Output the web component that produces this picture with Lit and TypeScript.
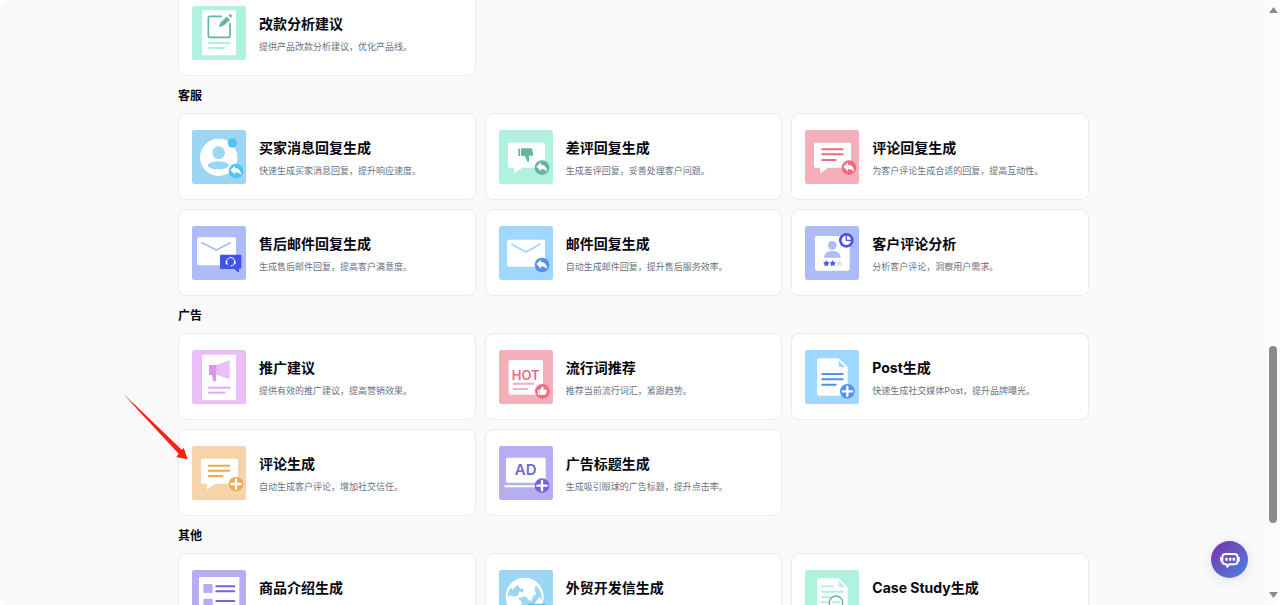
import { LitElement, html, svg, css, nothing } from "lit";
import { customElement, query } from "lit/decorators.js";

type Tool = { title: string; desc?: string; icon: string; marked?: boolean };
type Group = { name?: string; tools: Tool[] };

const GROUPS: Group[] = [
  { tools: [{ title: "改款分析建议", desc: "提供产品改款分析建议，优化产品线。", icon: "edit" }] },
  {
    name: "客服",
    tools: [
      { title: "买家消息回复生成", desc: "快速生成买家消息回复，提升响应速度。", icon: "buyer" },
      { title: "差评回复生成", desc: "生成差评回复，妥善处理客户问题。", icon: "bad" },
      { title: "评论回复生成", desc: "为客户评论生成合适的回复，提高互动性。", icon: "comment" },
      { title: "售后邮件回复生成", desc: "生成售后邮件回复，提高客户满意度。", icon: "aftersale" },
      { title: "邮件回复生成", desc: "自动生成邮件回复，提升售后服务效率。", icon: "mail" },
      { title: "客户评论分析", desc: "分析客户评论，洞察用户需求。", icon: "analysis" },
    ],
  },
  {
    name: "广告",
    tools: [
      { title: "推广建议", desc: "提供有效的推广建议，提高营销效果。", icon: "promo" },
      { title: "流行词推荐", desc: "推荐当前流行词汇，紧跟趋势。", icon: "hot" },
      { title: "Post生成", desc: "快速生成社交媒体Post，提升品牌曝光。", icon: "post" },
      { title: "评论生成", desc: "自动生成客户评论，增加社交信任。", icon: "review", marked: true },
      { title: "广告标题生成", desc: "生成吸引眼球的广告标题，提升点击率。", icon: "ad" },
    ],
  },
  {
    name: "其他",
    tools: [
      { title: "商品介绍生成", icon: "product" },
      { title: "外贸开发信生成", icon: "globe" },
      { title: "Case Study生成", icon: "study" },
    ],
  },
];

const tile = (c: string) => svg`<rect width="162" height="162" rx="7" fill=${c} />`;
const line = (x1: number, x2: number, y: number, c: string, w = 6) =>
  svg`<path d="M${x1} ${y}H${x2}" stroke=${c} stroke-width=${w} stroke-linecap="round" />`;
const reply = (x: number, y: number, c: string) => svg`<g transform="translate(${x} ${y})">
  <circle r="22" fill=${c} />
  <path d="M-17 -3L-3 -16V-9C9 -9 15 0 15 13C10 6 5 4 -3 4V11Z" fill="#fff" /></g>`;
const plus = (x: number, y: number, c: string) => svg`<g transform="translate(${x} ${y})">
  <circle r="22" fill=${c} />
  <path d="M-14 0H14M0 -14V14" stroke="#fff" stroke-width="7" stroke-linecap="round" /></g>`;
const bubble = svg`<path fill="#fff" d="M31 38H134Q138 38 138 42V109Q138 113 134 113H70L48 129Q45 131 45 127V113H31Q27 113 27 109V42Q27 38 31 38Z" />`;
const page = (fold: string) => svg`<path fill="#fff" d="M43 25H101L128 52V130Q128 137 121 137H43Q36 137 36 130V32Q36 25 43 25Z" />
  <path d="M101 32V48Q101 52 105 52H121Z" fill=${fold} />`;
const star = (x: number, c: string) => svg`<path transform="translate(${x} 112)" fill=${c}
  stroke=${c} stroke-width="2" stroke-linejoin="round"
  d="M0 -8L2.5 -2.8L8 -2.2L4 1.8L5 7.4L0 4.6L-5 7.4L-4 1.8L-8 -2.2L-2.5 -2.8Z" />`;

const ICONS: Record<string, unknown> = {
  edit: svg`${tile("#b0f2df")}<rect x="30" y="13" width="102" height="135" rx="2" fill="#fff" />
    <path d="M88 31H54Q49 31 49 36V89Q49 94 54 94H109Q114 94 114 89V52" fill="none" stroke="#62b5a0" stroke-width="5" stroke-linecap="round" />
    <path d="M82 62L86 50L104 33L113 42L95 58Z" fill="#62b5a0" stroke="#62b5a0" stroke-width="2" stroke-linejoin="round" />
    <path d="M111 28L115 25L119 29L116 34Z" fill="#62b5a0" stroke="#62b5a0" stroke-width="3" stroke-linejoin="round" />
    ${line(50, 113, 111, "#b0f2df")}${line(50, 97, 126, "#b0f2df")}`,
  buyer: svg`${tile("#9bd6f3")}<circle cx="80" cy="82" r="56" fill="#fff" />
    <circle cx="80" cy="68" r="19" fill="#9bd6f3" /><ellipse cx="79" cy="106" rx="32" ry="12" fill="#9bd6f3" />
    <circle cx="121" cy="39" r="14" fill="#4fc3f7" />${reply(132, 123, "#4fc3f7")}`,
  bad: svg`${tile("#b0f2df")}${bubble}
    <path fill="#62b5a0" d="M58 56H63V78H58ZM66 55H98Q102 62 103 77H90V92Q90 97 85 95Q83 84 76 78L66 77Z" />
    ${reply(129, 113, "#62b5a0")}`,
  comment: svg`${tile("#f4afba")}${bubble}${line(52, 113, 58, "#ef6b82")}${line(52, 113, 73, "#ef6b82")}${line(52, 92, 90, "#ef6b82")}
    ${reply(132, 113, "#ef6b82")}`,
  aftersale: svg`${tile("#adbcf8")}<rect x="15" y="34" width="117" height="84" rx="6" fill="#fff" />
    <path d="M30 50L73 72L115 50" fill="none" stroke="#adbcf8" stroke-width="5" stroke-linecap="round" />
    <path d="M87 86H145Q148 86 148 89V125Q148 128 145 128H141V140L126 129H87Q84 129 84 126V89Q84 86 87 86Z" fill="#4253ea" />
    <path d="M106 115Q101 104 108 98Q116 91 124 97Q131 104 126 115Q123 120 117 120" fill="none" stroke="#fff" stroke-width="3" stroke-linecap="round" />
    <path d="M103 106V113M129 106V113" stroke="#fff" stroke-width="4" stroke-linecap="round" />`,
  mail: svg`${tile("#a0d7ff")}<rect x="24" y="41" width="114" height="81" rx="6" fill="#fff" />
    <path d="M38 55L81 78L123 55" fill="none" stroke="#a0d7ff" stroke-width="5" stroke-linecap="round" />
    ${reply(129, 117, "#5591ec")}`,
  analysis: svg`${tile("#adbcf8")}<rect x="30" y="30" width="104" height="104" rx="6" fill="#fff" />
    <circle cx="82" cy="58" r="13" fill="#adbcf8" /><path d="M57 95Q58 75 82 75Q106 75 107 95Z" fill="#adbcf8" />
    ${star(64, "#4353e8")}${star(83, "#4353e8")}${star(103, "#dcdde4")}
    <circle cx="124" cy="43" r="22" fill="#4353e8" />
    <circle cx="124" cy="43" r="14" fill="#fff" />
    <path d="M124 29V43H138" fill="none" stroke="#4353e8" stroke-width="4" />`,
  promo: svg`${tile("#e9bef9")}<rect x="30" y="14" width="102" height="137" rx="2" fill="#fff" />
    <path d="M74 44L113 31V88L74 74Z" fill="#e9bef9" />
    <path d="M51 45H74V75H72L73 93H63L60 75H51Z" fill="#d999ea" />
    ${line(50, 113, 113, "#e3a9f5")}${line(50, 97, 128, "#e3a9f5")}`,
  hot: svg`${tile("#f4afba")}<rect x="29" y="30" width="103" height="104" rx="6" fill="#fff" />
    <text x="80" y="90" text-anchor="middle" font-size="39" font-weight="600" fill="#ef6b82">HOT</text>
    ${line(44, 103, 101, "#f4afba")}${line(44, 84, 117, "#f4afba")}
    <circle cx="130" cy="124" r="22" fill="#ef6b82" />
    <path d="M117 121H121V134H117ZM123 121L129 111Q133 109 133 113L132 119H142Q144 127 139 134H123Z" fill="#fff" stroke="#fff" stroke-width="1" />`,
  post: svg`${tile("#a0d7ff")}${page("#a0d7ff")}
    ${line(52, 113, 72, "#5591ec")}${line(52, 113, 88, "#5591ec")}${line(52, 92, 104, "#5591ec")}
    ${plus(127, 124, "#5591ec")}`,
  review: svg`${tile("#f6d3a9")}${bubble}${line(50, 112, 59, "#f2a850")}${line(50, 112, 74, "#f2a850")}${line(50, 91, 90, "#f2a850")}
    ${plus(132, 114, "#f2a850")}`,
  ad: svg`${tile("#b6aef2")}<rect x="21" y="35" width="119" height="75" rx="5" fill="#fff" />
    <text x="80" y="88" text-anchor="middle" font-size="45" font-weight="600" fill="#7464dc">AD</text>
    ${line(19, 112, 121, "#fff", 6)}${plus(129, 119, "#7464dc")}`,
  product: svg`${tile("#b6aef2")}<rect x="21" y="21" width="121" height="120" rx="2" fill="#fff" />
    ${[42, 86].map(
      (y) => svg`<rect x="34" y=${y} width="28" height="27" rx="4" fill="#b6aef2" />
      ${line(73, 127, y + 7, "#7464dc")}${line(73, y > 50 ? 108 : 127, y + 22, "#7464dc")}`,
    )}`,
  globe: svg`${tile("#9bd6f3")}<circle cx="77" cy="80" r="57" fill="#fff" />
    <path fill="#9bd6f3" d="M25 80Q27 62 36 52L40 60L48 50L58 46L62 54L73 58L72 68L62 64L58 74L46 80L34 76Z" />
    <path fill="#9bd6f3" d="M56 82L64 84L76 78L84 84L90 92H98L104 76L112 72L106 58L110 46Q122 56 128 72L129 88L120 82L112 94L104 104H88L80 114L66 110L68 96Z" />
    <rect x="87" y="101" width="55" height="38" rx="3" fill="#4fc3f7" />
    <path d="M93 107L114 118L136 107" fill="none" stroke="#9be0fb" stroke-width="3" />`,
  study: svg`${tile("#b0f2df")}${page("#b0f2df")}
    ${line(50, 83, 49, "#b0f2df")}${line(50, 113, 65, "#b0f2df")}${line(50, 76, 81, "#b0f2df")}${line(50, 70, 97, "#b0f2df")}
    <circle cx="93" cy="98" r="20" fill="#fff" stroke="#62b5a0" stroke-width="4" />${line(82, 104, 97, "#b0f2df")}
    <path d="M107 112L120 125" stroke="#62b5a0" stroke-width="5" stroke-linecap="round" />`,
};

@customElement("tool-card")
class ToolCard extends LitElement {
  static properties = { tool: { attribute: false } };
  declare tool: Tool;

  static styles = css`
    :host {
      display: block;
    }
    .card {
      position: relative;
      display: flex;
      align-items: center;
      gap: 13px;
      padding: 16px 13px 15px;
      border: 1px solid #e9ebf5;
      border-radius: 8px;
      background: #fff;
      color: #05070f;
      text-decoration: none;
    }
    .icon {
      flex: none;
      width: 54px;
      height: 54px;
    }
    .text {
      min-width: 0;
    }
    .title {
      margin: 0 0 5px;
      font-size: 14px;
      line-height: 22px;
      font-weight: 700;
    }
    .desc {
      margin: 0;
      min-height: 14px;
      font-size: 9px;
      line-height: 14px;
      color: #6b7280;
    }
    .pointer {
      position: absolute;
      left: -55px;
      top: -36px;
      width: 65px;
      height: 66px;
      pointer-events: none;
    }
  `;

  render() {
    const t = this.tool;
    return html`<a class="card" href="#">
      <svg class="icon" viewBox="0 0 162 162" aria-hidden="true">${ICONS[t.icon]}</svg>
      <div class="text">
        <h3 class="title">${t.title}</h3>
        <p class="desc">${t.desc ?? nothing}</p>
      </div>
      ${t.marked
        ? html`<svg class="pointer" viewBox="0 0 195 198" aria-hidden="true">
            <defs>
              <linearGradient id="fade" x1="0" y1="0" x2="1" y2="1">
                <stop offset="0" stop-color="#ff2010" stop-opacity=".4" />
                <stop offset=".15" stop-color="#ff2010" />
              </linearGradient>
            </defs>
            <path fill="url(#fade)" d="M3 4L2 5L164 179L157 189L191 196L179 161L174 168Z" />
          </svg>`
        : nothing}
    </a>`;
  }
}

@customElement("app-root")
class AppRoot extends LitElement {
  @query(".scroller") scroller!: HTMLElement;

  static styles = css`
    :host {
      display: block;
      font-family: Inter, "Noto Sans CJK SC", sans-serif;
      color: #05070f;
    }
    .frame {
      position: relative;
      display: flex;
      height: 100vh;
      overflow: hidden;
      border-radius: 8px;
      background: #fafafa;
    }
    .scroller {
      flex: 1;
      min-width: 0;
      overflow: hidden;
    }
    .content {
      width: 100%;
      max-width: 911px;
      margin: 0 auto;
    }
    .heading {
      margin: 0;
      padding: 11px 0 8px;
      font-size: 12px;
      line-height: 18px;
      font-weight: 700;
    }
    .grid {
      display: grid;
      grid-template-columns: repeat(3, 1fr);
      gap: 9px;
    }
    .rail {
      flex: none;
      width: 13px;
      box-sizing: border-box;
      padding: 7px 2px;
      display: flex;
      flex-direction: column;
      background: #fcfcfc;
    }
    .tip {
      width: 9px;
      height: 6px;
    }
    .track {
      flex: 1;
      display: flex;
      flex-direction: column;
    }
    .before {
      flex: 333;
    }
    .thumb {
      flex: 177;
      width: 8px;
      border-radius: 4px;
      background: #8b8b8b;
    }
    .after {
      flex: 69;
    }
    .chat {
      position: absolute;
      right: 32px;
      bottom: 27px;
      width: 37px;
      height: 37px;
      padding: 0;
      border: 0;
      border-radius: 50%;
      display: grid;
      place-items: center;
      background: linear-gradient(135deg, #7e2ea8, #4b86e6);
      box-shadow: 0 2px 12px rgba(80, 90, 180, 0.16);
    }
    .chat-icon {
      width: 20px;
      height: 18px;
    }
  `;

  async firstUpdated() {
    const cards = Array.from(this.renderRoot.querySelectorAll("tool-card")) as ToolCard[];
    await Promise.all(cards.map((c) => c.updateComplete));
    this.scroller.scrollTop = 11;
  }

  render() {
    return html`<div class="frame">
      <main class="scroller">
        <div class="content">
          ${GROUPS.map(
            (g) => html`<section>
              ${g.name ? html`<h2 class="heading">${g.name}</h2>` : nothing}
              <div class="grid">${g.tools.map((t) => html`<tool-card .tool=${t}></tool-card>`)}</div>
            </section>`,
          )}
        </div>
      </main>
      <div class="rail" aria-hidden="true">
        <svg class="tip" viewBox="0 0 9 6"><path d="M4.5 0L9 6H0Z" fill="#8b8b8b" /></svg>
        <div class="track">
          <div class="before"></div>
          <div class="thumb"></div>
          <div class="after"></div>
        </div>
        <svg class="tip" viewBox="0 0 9 6"><path d="M0 0H9L4.5 6Z" fill="#8b8b8b" /></svg>
      </div>
      <button class="chat" aria-label="聊天">
        <svg class="chat-icon" viewBox="0 0 60 54" aria-hidden="true">
          <path
            d="M18 9H42Q53 9 53 19V30Q53 40 42 40H28L22 47L19 40H18Q7 40 7 30V19Q7 9 18 9Z"
            fill="none" stroke="#fff" stroke-width="6" stroke-linejoin="round" />
          <path d="M3 20V30M57 20V30" stroke="#fff" stroke-width="5" stroke-linecap="round" />
          <g fill="#fff">
            <rect x="16" y="20" width="7" height="9" rx="2" />
            <rect x="27" y="20" width="7" height="9" rx="2" />
            <rect x="38" y="20" width="7" height="9" rx="2" />
          </g>
        </svg>
      </button>
    </div>`;
  }
}
